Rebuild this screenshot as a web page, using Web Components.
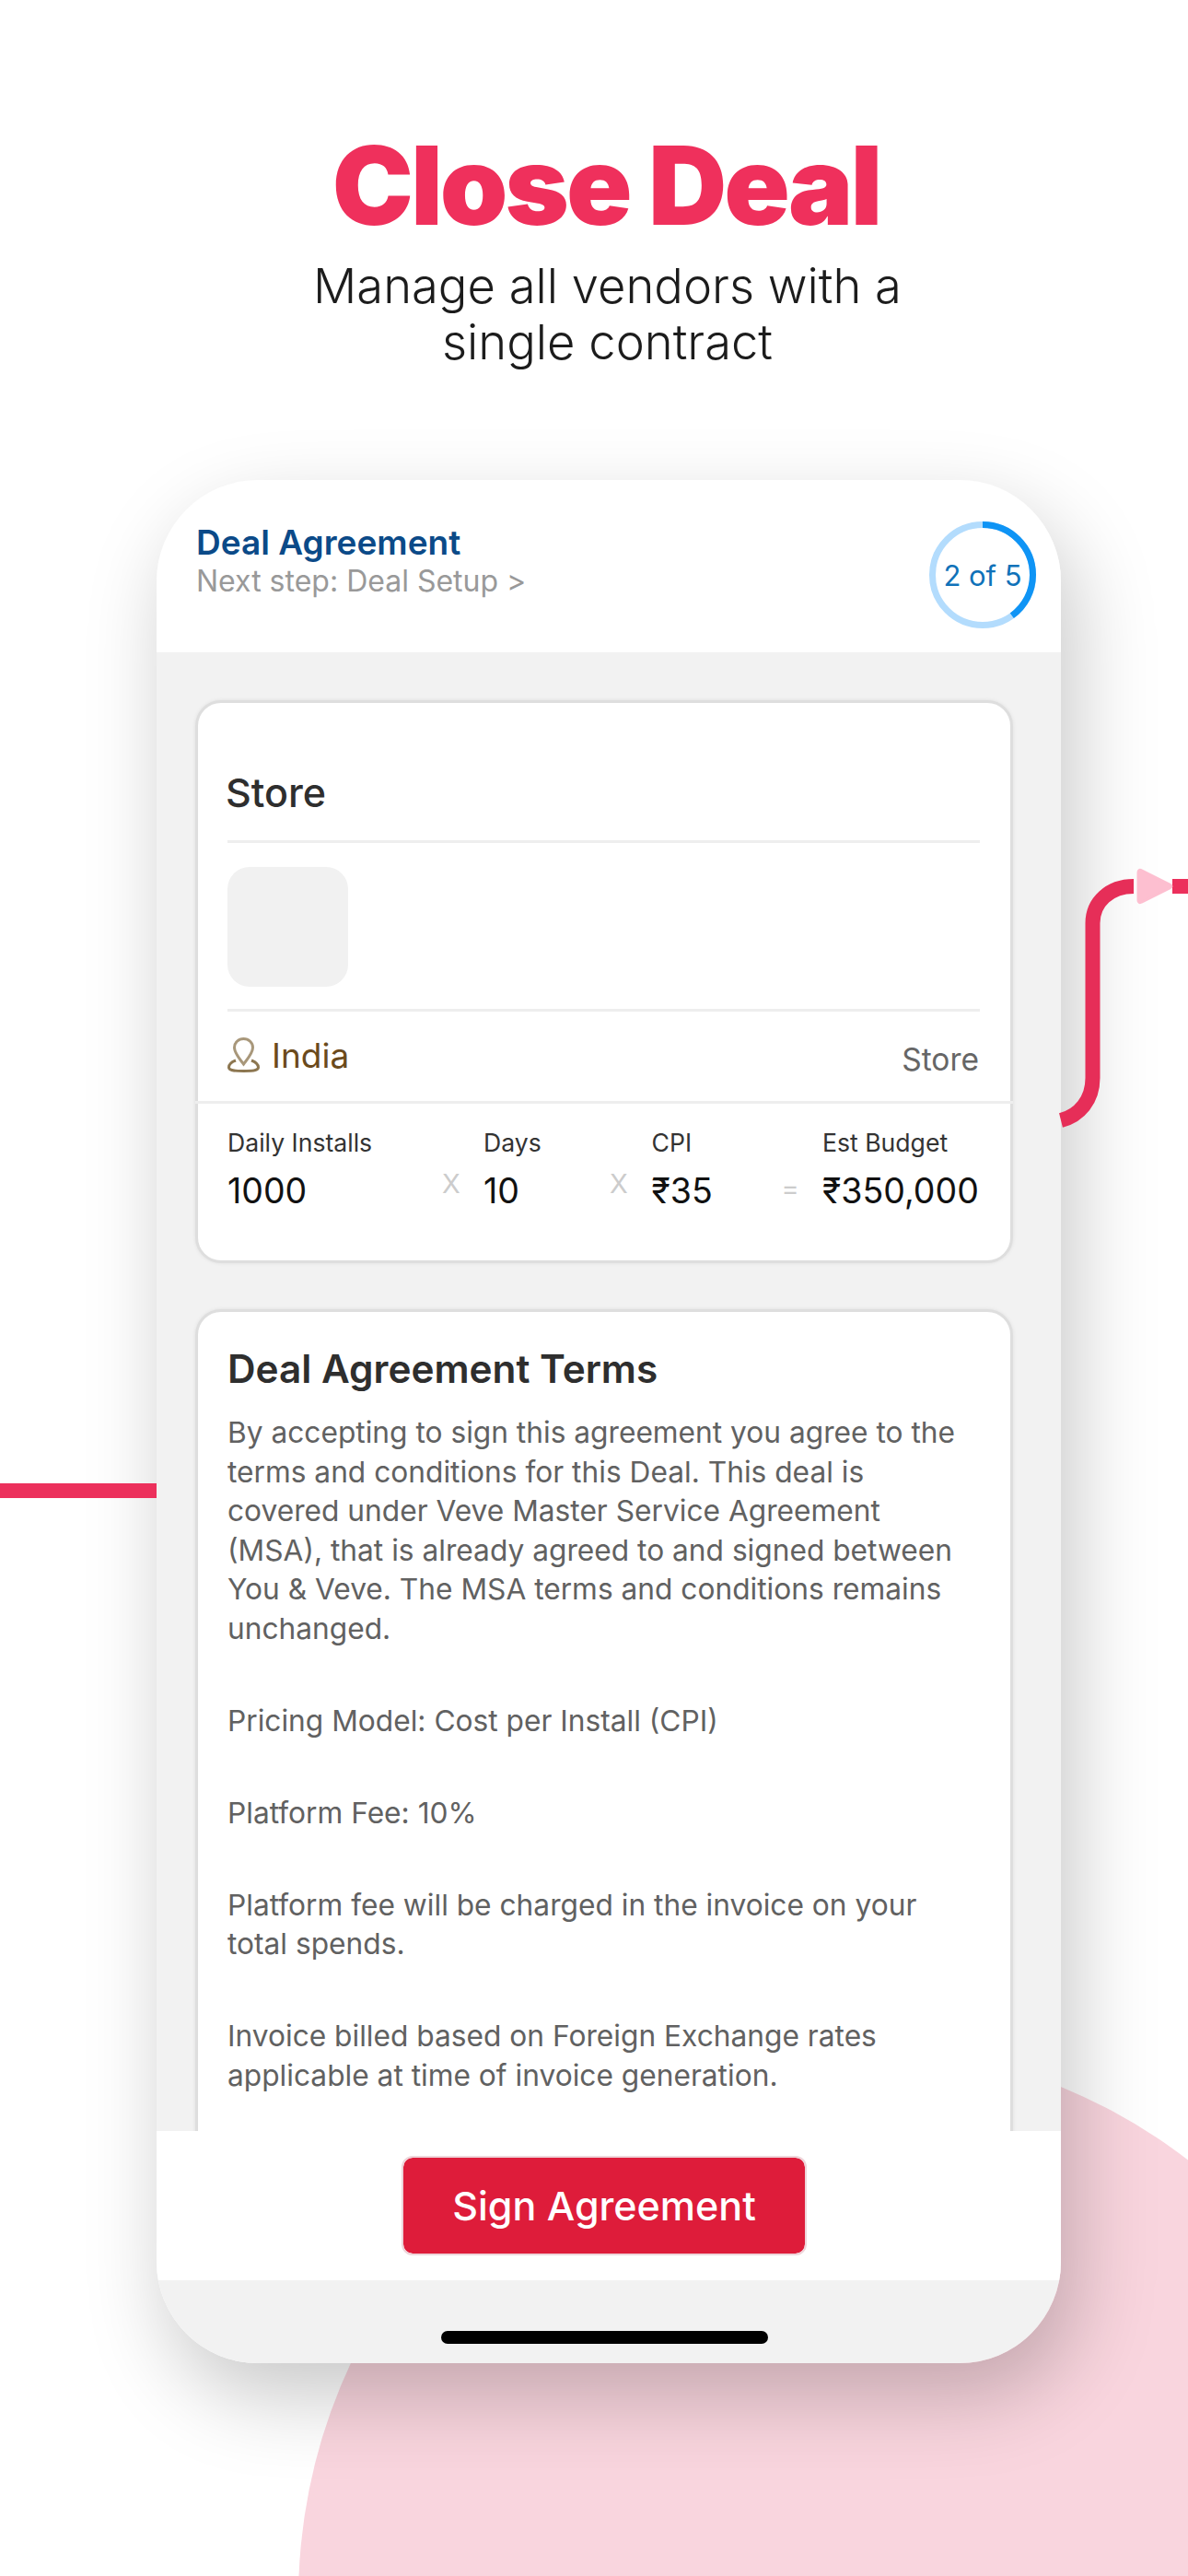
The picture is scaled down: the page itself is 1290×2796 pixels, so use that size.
<!DOCTYPE html>
<html>
<head>
<meta charset="utf-8">
<style>
  html, body { margin: 0; padding: 0; background: #fff; }
  body { width: 1290px; height: 2796px; overflow: hidden; position: relative; font-family: Inter, "Noto Sans", sans-serif; }
</style>
</head>
<body>
<promo-page>
  <promo-head slot="head" title="Close Deal">Manage all vendors with a<br>single contract</promo-head>
  <phone-frame slot="phone">
    <deal-header slot="top" heading="Deal Agreement" next="Next step: Deal Setup &gt;" step="2 of 5"></deal-header>
    <store-card></store-card>
    <terms-card heading="Deal Agreement Terms">
      <p>By accepting to sign this agreement you agree to the terms and conditions for this Deal. This deal is covered under Veve Master Service Agreement (MSA), that is already agreed to and signed between You &amp; Veve. The MSA terms and conditions remains unchanged.</p>
      <p>Pricing Model: Cost per Install (CPI)</p>
      <p>Platform Fee: 10%</p>
      <p>Platform fee will be charged in the invoice on your total spends.</p>
      <p>Invoice billed based on Foreign Exchange rates applicable at time of invoice generation.</p>
    </terms-card>
    <sign-footer slot="bottom" label="Sign Agreement"></sign-footer>
  </phone-frame>
</promo-page>

<script>
// page shell: decorations sit on a free canvas around the phone
class PromoPage extends HTMLElement {
  constructor(){
    super();
    this.attachShadow({ mode: 'open' });
    this.shadowRoot.innerHTML = `
      <style>
        :host { display: block; position: relative; width: 1290px; height: 2796px; overflow: hidden; background: #fff; }
        .blob { position: absolute; left: 324px; top: 2220px; width: 1200px; height: 1200px; border-radius: 50%; background: #f9d5de; }
        .lines { position: absolute; left: 0; top: 0; z-index: 3; pointer-events: none; }
        .stack { position: relative; display: flex; flex-direction: column; align-items: center; padding: 142px 0 0 32px; }
        ::slotted([slot=phone]) { margin-top: 119px; }
      </style>
      <div class="blob"></div>
      <div class="stack">
        <slot name="head"></slot>
        <slot name="phone"></slot>
      </div>
      <svg class="lines" width="1290" height="2796" fill="none">
        <path d="M0 1618H170" stroke="#ec305c" stroke-width="16"/>
        <path d="M1152 1216C1172 1211 1186.500 1194 1186.500 1170V1002C1186.500 979 1205 962 1231 962" stroke="#e62e58" stroke-width="16"/>
        <path d="M1273 962H1290" stroke="#ec305c" stroke-width="16"/>
        <path d="M1240 945L1270 960Q1274 962 1270 964L1240 979Q1236 981 1236 977V947Q1236 943 1240 945Z" fill="#fdbfd0" stroke="#fdbfd0" stroke-width="3"/>
      </svg>
    `;
  }
}

class PromoHead extends HTMLElement {
  constructor(){
    super();
    this.attachShadow({ mode: 'open' });
    this.shadowRoot.innerHTML = `
      <style>
        :host { display: block; text-align: center; margin-left: -3px; }
        h1 { margin: 0 0 0 -3px; font: 900 118px/118px Inter, sans-serif; letter-spacing: -3px; color: #ef305c; }
        p { margin: 20px 0 0; font: 300 52.500px/61px Inter, sans-serif; color: #1c1c1c; }
      </style>
      <h1>${this.getAttribute('title')}</h1>
      <p><slot></slot></p>
    `;
  }
}

class PhoneFrame extends HTMLElement {
  constructor(){
    super();
    this.attachShadow({ mode: 'open' });
    this.shadowRoot.innerHTML = `
      <style>
        :host { display: block; position: relative; z-index: 2; width: 982px; height: 2044px; border-radius: 110px; box-shadow: 14px 36px 90px rgba(0,0,0,.22); }
        .screen { height: 100%; border-radius: 110px; overflow: hidden; background: #f2f2f2; display: flex; flex-direction: column; }
        .body { flex: 1; min-height: 0; overflow: hidden; padding: 52px 52px 0 42px; display: flex; flex-direction: column; gap: 50px; }
        .bar { height: 90px; flex: none; display: flex; justify-content: center; padding: 55px 9px 0 0; box-sizing: border-box; }
        .bar i { display: block; width: 355px; height: 14px; border-radius: 7px; background: #000; }
      </style>
      <div class="screen">
        <slot name="top"></slot>
        <div class="body"><slot></slot></div>
        <slot name="bottom"></slot>
        <div class="bar"><i></i></div>
      </div>
    `;
  }
}

class DealHeader extends HTMLElement {
  constructor(){
    super();
    this.attachShadow({ mode: 'open' });
    // ring: r 54.5, circumference 342.4, 40% = 137
    this.shadowRoot.innerHTML = `
      <style>
        :host { display: flex; height: 187px; box-sizing: border-box; background: #fff; justify-content: space-between; padding: 45px 27px 0 43px; }
        .t { font: 600 37px/46px Inter, sans-serif; color: #0b4a88; }
        .n { font: 400 32px/40px Inter, sans-serif; color: #999; margin-top: -1px; }
        .ring { position: relative; width: 116px; height: 116px; }
        .ring svg { position: absolute; inset: 0; }
        .ring span { position: absolute; inset: 0; display: flex; align-items: center; justify-content: center; font: 400 31px/1 Inter, sans-serif; color: #1072b9; white-space: nowrap; }
      </style>
      <div>
        <div class="t">${this.getAttribute('heading')}</div>
        <div class="n">${this.getAttribute('next').replace('>', '&gt;')}</div>
      </div>
      <div class="ring">
        <svg width="116" height="116" fill="none" stroke-width="7">
          <circle cx="58" cy="58" r="54.5" stroke="#b3dcfd"/>
          <circle cx="58" cy="58" r="54.5" stroke="#0f94f5" stroke-dasharray="137 343" transform="rotate(-90 58 58)"/>
        </svg>
        <span>${this.getAttribute('step')}</span>
      </div>
    `;
  }
}

class StoreCard extends HTMLElement {
  constructor(){
    super();
    this.attachShadow({ mode: 'open' });
    this.shadowRoot.innerHTML = `
      <style>
        :host { display: block; flex: none; height: 611px; box-sizing: border-box; background: #fff; border: 3px solid #dedede; border-radius: 28px; box-shadow: 0 0 4px rgba(0,0,0,.08); }
        .name { margin: 0 33px 0 32px; height: 152px; box-sizing: border-box; padding-top: 73px; font: 500 43px/48px Inter, sans-serif; color: #2e2e2e; border-bottom: 3px solid #eee; text-indent: -2px; }
        .thumbwrap { margin: 0 33px 0 32px; height: 183px; box-sizing: border-box; padding-top: 26px; border-bottom: 3px solid #eee; }
        .thumb { width: 131px; height: 130px; border-radius: 24px; background: #f1f1f1; }
        .loc { display: flex; align-items: center; justify-content: space-between; height: 97px; box-sizing: border-box; margin: 0 33px 0 32px; padding: 0 1px 0 0; }
        .place { display: flex; align-items: center; gap: 13px; font: 400 37px/44px Inter, sans-serif; color: #6b4a1c; margin-top: -2px; }
        .place svg { margin-top: -2px; }
        .type { font: 400 33.500px/40px Inter, sans-serif; color: #666; margin-top: 6px; }
        .rule { height: 3px; margin: 0 -3px; background: #eee; }
        .nums { display: grid; grid-template-columns: 233px 45px 137px 45.500px 141px 44.500px auto; padding: 22px 0 0 32px; }
        .l { font: 400 26.600px/40px Inter, sans-serif; color: #333; white-space: nowrap; }
        .v { font: 400 37.500px/44px Inter, sans-serif; color: #111; margin-top: 11px; white-space: nowrap; }
        .op { font: 400 29px/34px Inter, sans-serif; color: #ccc; align-self: end; position: relative; top: -13px; }
        .op.eq { top: -8px; }
      </style>
      <div class="name">Store</div>
      <div class="thumbwrap"><div class="thumb"></div></div>
      <div class="loc">
        <div class="place">
          <svg width="35" height="38" viewBox="0 0 35 38" fill="none" stroke="#a8977a" stroke-width="3">
            <path d="M17.500 29C13 23 7.500 17 7.500 11A10 9.500 0 0 1 27.500 11C27.500 17 22 23 17.500 29Z"/>
            <path d="M9 25C4 27 1.500 29.500 1.500 32.500C1.500 35.500 5 36.500 17.500 36.500C30 36.500 33.500 35.500 33.500 32.500C33.500 29.500 31 27 26 25" stroke="#8c7650"/>
          </svg>
          <span>India</span>
        </div>
        <div class="type">Store</div>
      </div>
      <div class="rule"></div>
      <div class="nums">
        <div><div class="l">Daily Installs</div><div class="v">1000</div></div>
        <div class="op">X</div>
        <div><div class="l">Days</div><div class="v">10</div></div>
        <div class="op">X</div>
        <div><div class="l">CPI</div><div class="v">₹35</div></div>
        <div class="op eq">=</div>
        <div><div class="l">Est Budget</div><div class="v">₹350,000</div></div>
      </div>
    `;
  }
}

class TermsCard extends HTMLElement {
  constructor(){
    super();
    this.attachShadow({ mode: 'open' });
    this.shadowRoot.innerHTML = `
      <style>
        :host { display: block; flex: none; height: 1100px; box-sizing: border-box; background: #fff; border: 3px solid #dedede; border-radius: 28px; padding: 36px 45px 0 32px; box-shadow: 0 0 4px rgba(0,0,0,.08); }
        h2 { margin: 0 0 22px; font: 600 42.300px/52px Inter, sans-serif; color: #2e2e2e; }
        .txt { font: 400 31.700px/42.500px Inter, sans-serif; color: #616161; }
        ::slotted(p) { margin: 0 0 57.500px; }
      </style>
      <h2>${this.getAttribute('heading')}</h2>
      <div class="txt"><slot></slot></div>
    `;
  }
}

class SignFooter extends HTMLElement {
  constructor(){
    super();
    this.attachShadow({ mode: 'open' });
    this.shadowRoot.innerHTML = `
      <style>
        :host { display: flex; flex: none; height: 162px; box-sizing: border-box; background: #fff; justify-content: center; align-items: center; padding-right: 10px; position: relative; z-index: 1; }
        button { width: 440px; height: 108px; border: 2px solid #eed5da; border-radius: 12px; background: #de1c3a; color: #fff; font: 500 43px/48px Inter, sans-serif; padding: 0; background-clip: padding-box; }
      </style>
      <button>${this.getAttribute('label')}</button>
    `;
  }
}

customElements.define('promo-page', PromoPage);
customElements.define('promo-head', PromoHead);
customElements.define('phone-frame', PhoneFrame);
customElements.define('deal-header', DealHeader);
customElements.define('store-card', StoreCard);
customElements.define('terms-card', TermsCard);
customElements.define('sign-footer', SignFooter);
</script>
</body>
</html>
